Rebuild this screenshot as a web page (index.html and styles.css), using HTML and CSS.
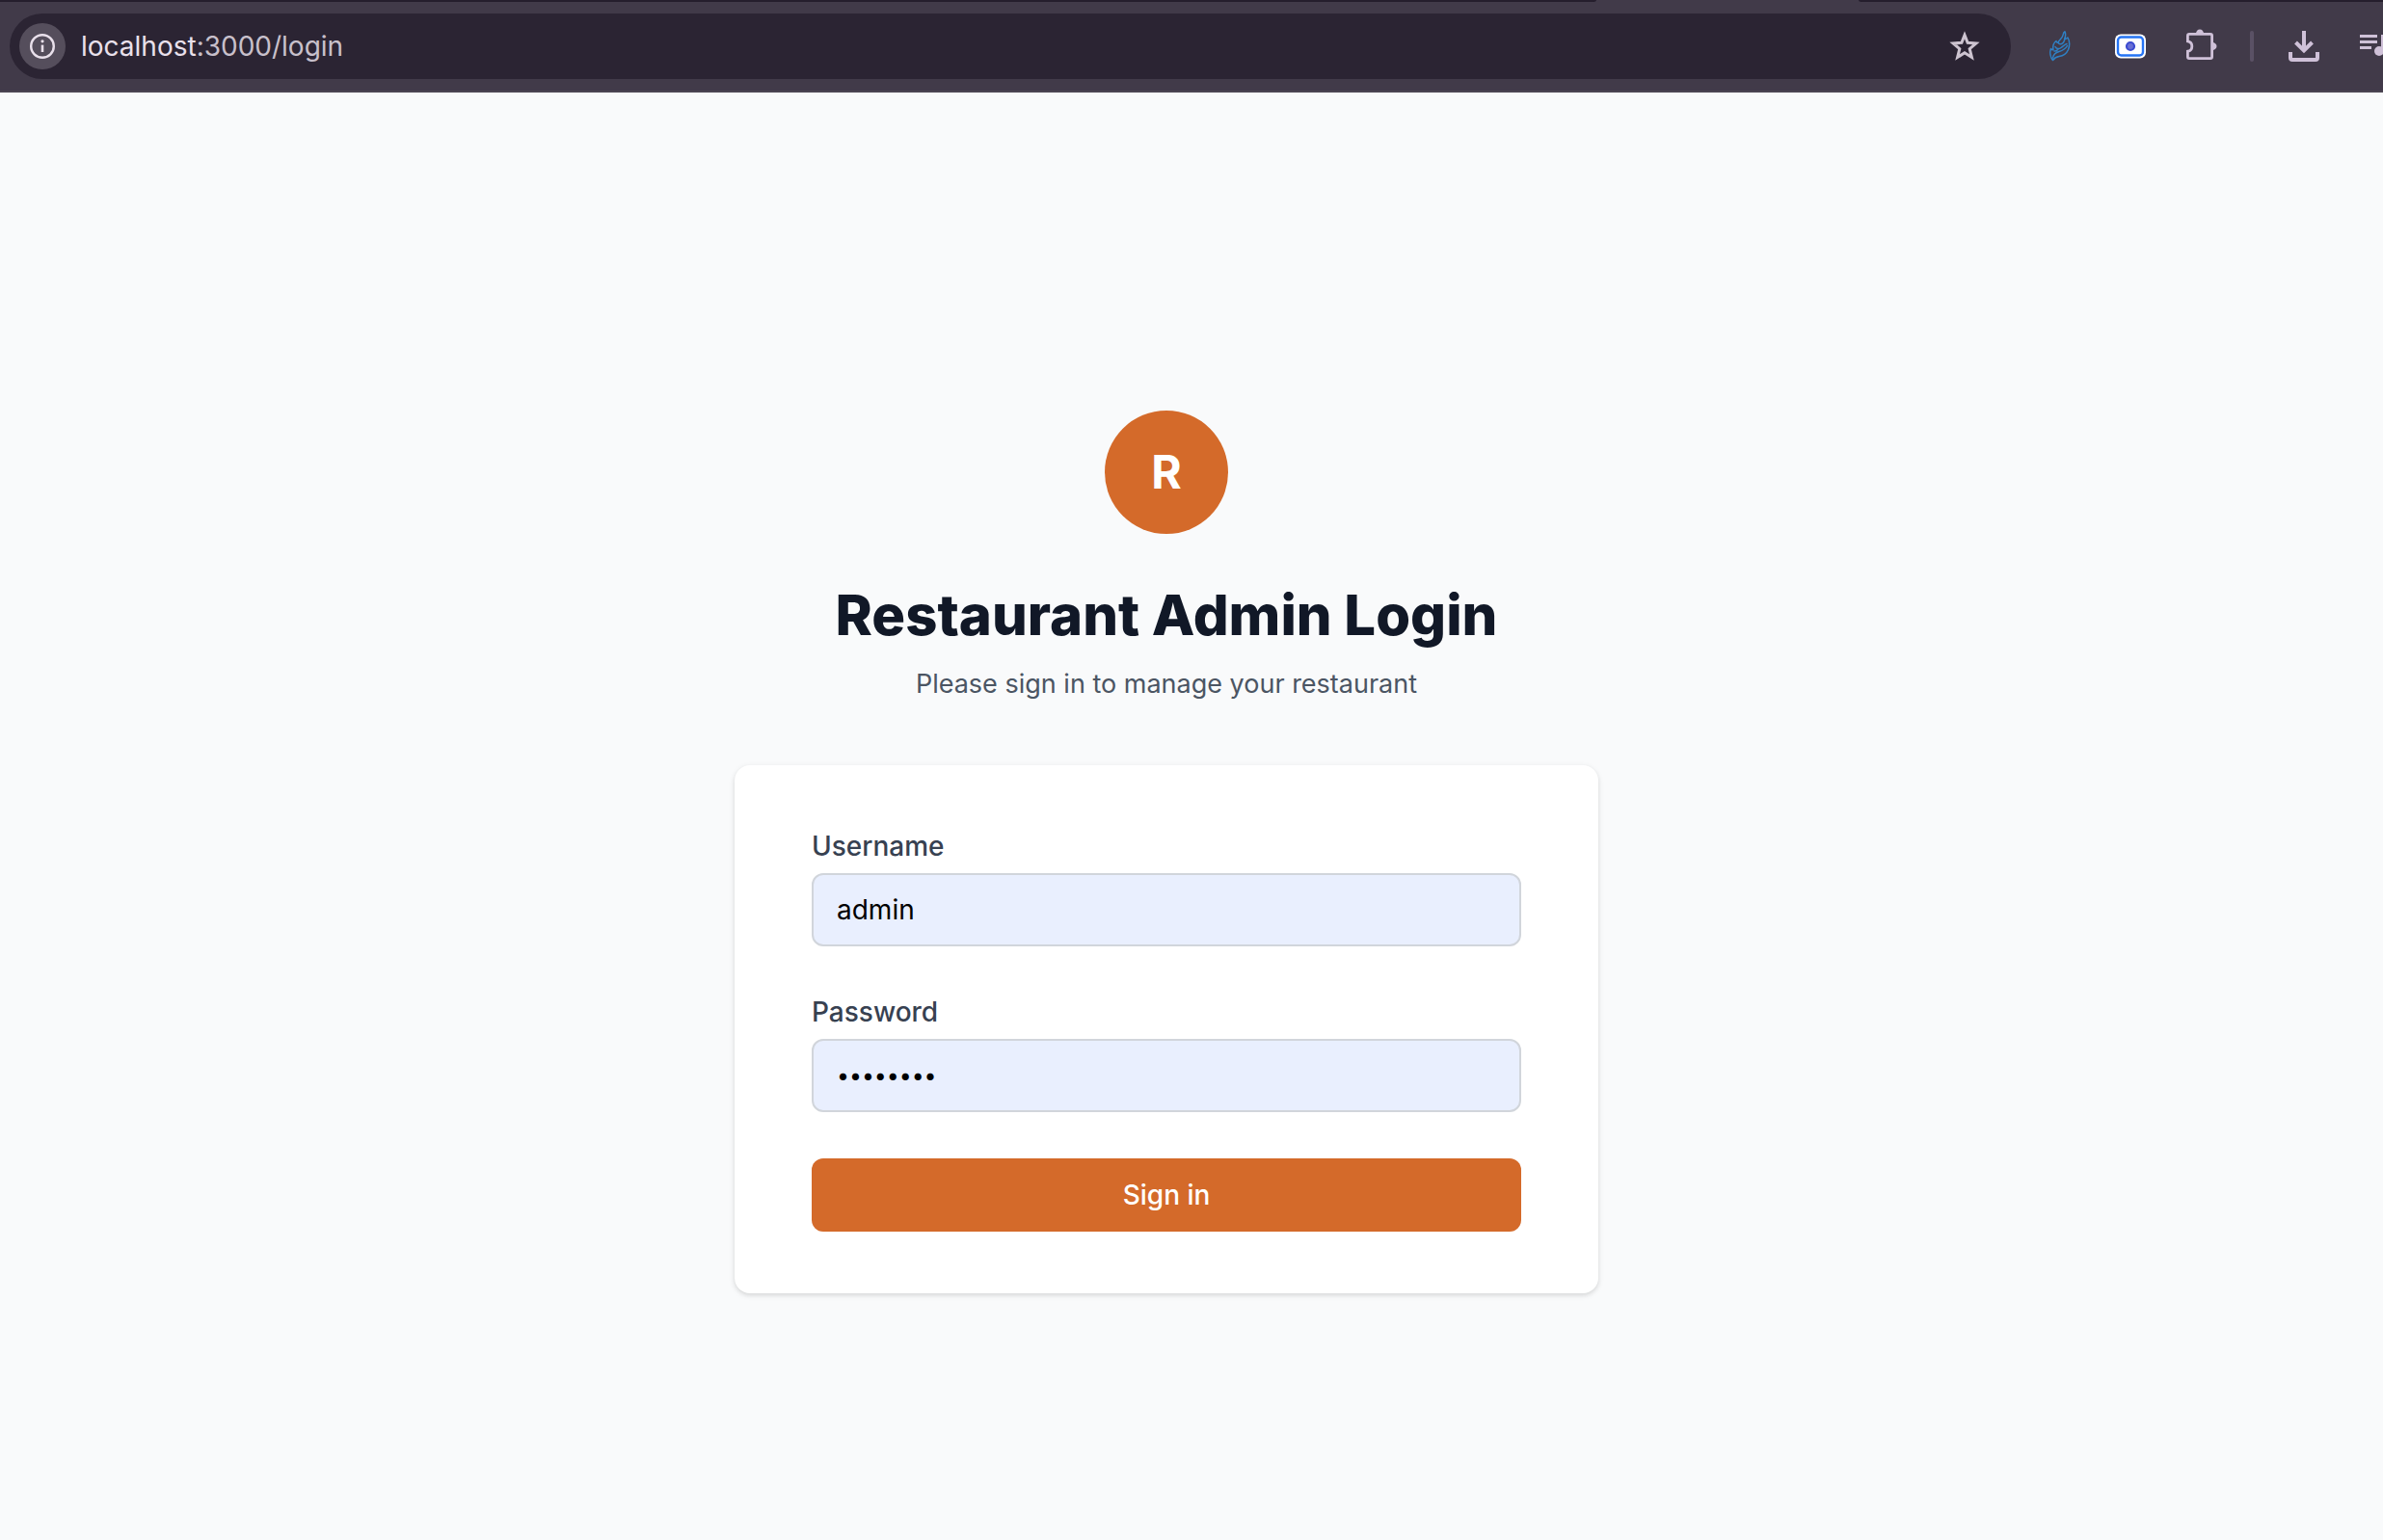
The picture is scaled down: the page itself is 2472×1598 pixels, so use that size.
FILE: index.html
```html
<!DOCTYPE html>
<html lang="en">
<head>
<meta charset="utf-8">
<title>Restaurant Admin Login</title>
<meta name="viewport" content="width=device-width, initial-scale=1">
<link rel="stylesheet" href="styles.css">
</head>
<body>
<header class="toolbar">
  <div class="tabstrip"><span class="tabstrip-side"></span><span class="tabstrip-end"></span></div>
  <div class="toolbar-row">
    <div class="omnibox">
      <button class="site-info" type="button" aria-label="View site information">
        <svg width="28" height="28" viewBox="0 0 28 28" fill="none"><circle cx="14" cy="14" r="11.8" stroke="#e9e0eb" stroke-width="2.4"/><path d="M14 12.6V20" stroke="#e9e0eb" stroke-width="2.6"/><circle cx="14" cy="8.8" r="1.6" fill="#e9e0eb"/></svg>
      </button>
      <div class="url"><span class="url-host">localhost</span>:3000/login</div>
      <button class="icon-button" type="button" aria-label="Bookmark this tab">
        <svg width="32" height="32" viewBox="0 0 32 32"><path d="M16 4.300l3.100 8 8.800.7-6.700 5.700 2.200 8.800-7.400-4.800-7.400 4.800 2.200-8.800-6.700-5.700 8.800-.7z" fill="none" stroke="#cdc4d0" stroke-width="3"/></svg>
      </button>
    </div>
    <nav class="actions" aria-label="Extensions and tools">
      <button class="icon-button" type="button" aria-label="Feather extension">
        <svg width="32" height="32" viewBox="0 0 32 32" fill="none" stroke="#2f80c4" stroke-width="1.500" stroke-linecap="round" stroke-linejoin="round"><path d="M9.500 30.500C7.500 28 5.800 23 7.500 18.500c.8 1.300 1.500 1.500 2.500 1.300-.8-4 .3-7.300 3-9.300.2 1.500 1 2 2 1.500.5-2.500 4.500-4 5-7.500.3-2 1-3.300 2-3.700 1 2.700.7 5.500-.5 7.700 1.700 0 2.700-.5 3.500-1.500 2 3.500 2 8.500.5 12.500-1.700 4-5 6.500-9.500 7-2.500.3-4 .5-6.500 4z"/><path d="M9.500 28c.5-3.500 3-5.500 6.500-6.500 4-1.200 6.500-2.500 8.500-6M12 16.500c1 2.500 4 2.500 6 1s4-3.500 6-4M15 12c.5 2 3 2.500 5 .5 1-1 1.500-2.500 1.800-3.500M11 21c2 .5 3-.5 4-2"/></svg>
      </button>
      <button class="icon-button" type="button" aria-label="Screen capture extension">
        <svg width="32" height="32" viewBox="0 0 32 32"><rect x="0" y="3.500" width="32" height="25" rx="6" fill="#fff"/><rect x="3" y="6.500" width="26" height="19" rx="3.500" fill="#fff" stroke="#2574f4" stroke-width="2.400"/><circle cx="16" cy="16" r="4" fill="#6a70d4" stroke="#3c4bd0" stroke-width="2.200"/></svg>
      </button>
      <button class="icon-button" type="button" aria-label="Extensions">
        <svg class="puzzle" width="32" height="32" viewBox="0 0 32 32"><path d="M10 3a4 4.600 0 0 1 8 0zM27 12a4.500 4 0 0 1 0 8z" fill="#cfc1d8"/><path d="M1.400 10.800V5a1.600 1.600 0 0 1 1.600-1.600h22A1.600 1.600 0 0 1 26.600 5v22a1.600 1.600 0 0 1-1.600 1.600H3A1.600 1.600 0 0 1 1.400 27v-5.800C7.300 20.500 7.300 11.500 1.400 10.800z" fill="none" stroke="#cfc1d8" stroke-width="2.800"/></svg>
      </button>
      <span class="separator"></span>
      <button class="icon-button" type="button" aria-label="Downloads">
        <svg width="32" height="32" viewBox="0 0 32 32" fill="none" stroke="#cfc1d8" stroke-width="4"><path d="M16 0v20M7.500 12l8.500 8.500 8.500-8.500M2 22v6a2 2 0 0 0 2 2h24a2 2 0 0 0 2-2v-6"/></svg>
      </button>
      <button class="icon-button" type="button" aria-label="Media controls">
        <svg width="36" height="32" viewBox="0 0 36 32"><path d="M0 4h18v3H0zM0 10h18v3H0zM0 16h12v3H0zM22 4h9v4h-6v13h-3z" fill="#cfc1d8"/><circle cx="20" cy="21" r="5" fill="#cfc1d8"/></svg>
      </button>
    </nav>
  </div>
</header>
<main class="page">
  <section class="login">
    <div class="logo">R</div>
    <h1 class="title">Restaurant Admin Login</h1>
    <p class="subtitle">Please sign in to manage your restaurant</p>
    <form class="card">
      <div class="field">
        <label for="username">Username</label>
        <input id="username" name="username" type="text" value="admin">
      </div>
      <div class="field">
        <label for="password">Password</label>
        <input id="password" name="password" type="password" value="admin123">
      </div>
      <button class="submit" type="submit">Sign in</button>
    </form>
  </section>
</main>
</body>
</html>
```
FILE: styles.css
```css
*, *::before, *::after { box-sizing: border-box; }

body {
  margin: 0;
  min-height: 100vh;
  display: flex;
  flex-direction: column;
  background: #f9fafb;
  font-family: Inter, "Liberation Sans", sans-serif;
  font-size: 28px;
  line-height: 40px;
  overflow-x: hidden;
}

button, input { font: inherit; }

/* Browser toolbar */
.toolbar {
  background: #413a49;
  border-bottom: 2px solid #4b4452;
  overflow: hidden;
}

.tabstrip {
  display: flex;
  justify-content: space-between;
  height: 2px;
}

.tabstrip-side { width: 67%; background: #251e2d; border-bottom-right-radius: 4px 2px; }
.tabstrip-end { width: 22%; background: #251e2d; border-bottom-left-radius: 4px 2px; }

.toolbar-row {
  display: flex;
  align-items: center;
  gap: 34px;
  padding: 12px 0 12px 10px;
}

.omnibox {
  flex: 1;
  display: flex;
  align-items: center;
  height: 68px;
  padding: 0 32px 0 10px;
  border-radius: 34px;
  background: #2b2433;
}

.site-info {
  display: flex;
  align-items: center;
  justify-content: center;
  width: 48px;
  height: 48px;
  padding: 0;
  border: 0;
  border-radius: 50%;
  background: #554e5c;
}

.url { flex: 1; padding-left: 16px; color: #c8c0cb; }
.url-host { color: #e9e0eb; }

.icon-button {
  display: flex;
  padding: 0;
  border: 0;
  background: none;
}

.puzzle { overflow: visible; }

/* The last icon runs past the window's edge */
.actions {
  flex: none;
  display: flex;
  align-items: center;
  gap: 42px;
  margin-right: -12px;
}

.separator {
  width: 4px;
  height: 32px;
  margin: 0 -6px 0 -8px;
  border-radius: 2px;
  background: #5a5165;
}

/* Login page */
.page {
  flex: 1;
  display: flex;
  align-items: center;
  justify-content: center;
  padding: 74px 52px 0 0;
}

.login {
  display: flex;
  flex-direction: column;
  align-items: center;
  width: 100%;
  max-width: 896px;
}

.logo {
  display: flex;
  align-items: center;
  justify-content: center;
  width: 128px;
  height: 128px;
  border-radius: 50%;
  background: #d46a2a;
  color: #fff;
  font-size: 48px;
  font-weight: 700;
}

.title {
  margin: 48px 0 0;
  color: #111827;
  font-size: 58px;
  font-weight: 800;
  line-height: 72px;
}

.subtitle { margin: 16px 0 0; color: #4b5563; font-size: 27px; }

.card {
  display: flex;
  flex-direction: column;
  gap: 48px;
  width: 100%;
  margin-top: 64px;
  padding: 64px 80px;
  border-radius: 16px;
  background: #fff;
  box-shadow: 0 2px 6px rgba(0, 0, 0, 0.1), 0 2px 4px rgba(0, 0, 0, 0.06);
}

.field { display: flex; flex-direction: column; gap: 8px; }
.field label { color: #374151; font-weight: 500; }

.field input {
  width: 100%;
  height: 76px;
  padding: 0 24px;
  border: 2px solid #d1d5db;
  border-radius: 12px;
  background: #e9effe;
  color: #000;
}

.field input[type="password"] { font-size: 23px; }

.submit {
  height: 76px;
  padding: 0 32px;
  border: 0;
  border-radius: 12px;
  background: #d46a2a;
  color: #fff;
  font-weight: 500;
}
```
